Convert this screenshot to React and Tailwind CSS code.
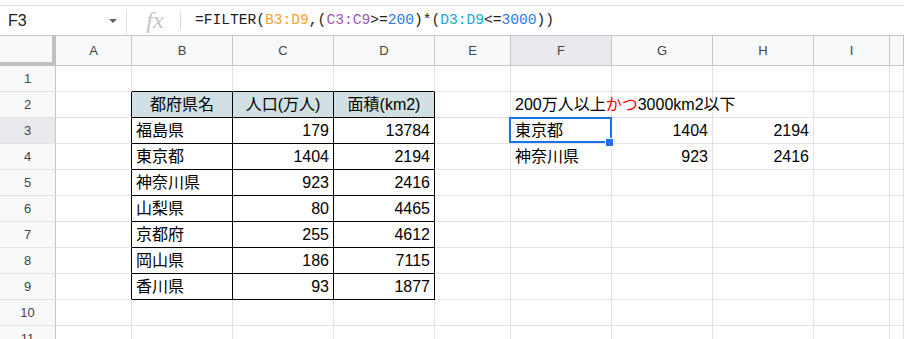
import React from "react";

const COLS = ["A", "B", "C", "D", "E", "F", "G", "H", "I", ""];
const GRID = "grid grid-cols-[56px_76px_101px_101px_101px_76px_101px_101px_101px_76px_1fr]";

const tableRows = [
  ["福島県", "179", "13784"],
  ["東京都", "1404", "2194"],
  ["神奈川県", "923", "2416"],
  ["山梨県", "80", "4465"],
  ["京都府", "255", "4612"],
  ["岡山県", "186", "7115"],
  ["香川県", "93", "1877"],
];

function Cell({ children, align = "left", black, blackRight, blackBottom, bg, overflow, className = "" }) {
  const br = black || blackRight ? "border-r-black" : "border-r-[#e2e2e2]";
  const bb = black || blackBottom ? "border-b-black" : "border-b-[#e2e2e2]";
  const al = align === "right" ? "justify-end pr-[4px]" : align === "center" ? "justify-center" : "justify-start pl-[4px]";
  return (
    <div
      className={`relative h-[26px] border-r border-b ${br} ${bb} ${bg || "bg-white"} flex items-center ${al} ${overflow ? "overflow-visible z-10" : "overflow-hidden"} whitespace-nowrap ${className}`}
    >
      {children}
    </div>
  );
}

function RowHead({ n, sel }) {
  return (
    <div
      className={`h-[26px] border-r border-r-[#c4c7c5] border-b border-b-[#e2e2e2] ${sel ? "bg-[#e8eaed]" : "bg-[#f8f9fa]"} flex items-center justify-center text-[13px] text-[#444]`}
    >
      {n}
    </div>
  );
}

export default function App() {
  const rows = [];
  for (let r = 1; r <= 11; r++) {
    const cells = [];
    cells.push(<RowHead key="h" n={r} sel={r === 3} />);
    cells.push(<Cell key="A" blackRight={r >= 2 && r <= 9} />);
    if (r === 2) {
      cells.push(<Cell key="B" black align="center" bg="bg-[#d0e0e3]">都府県名</Cell>);
      cells.push(<Cell key="C" black align="center" bg="bg-[#d0e0e3]">人口(万人)</Cell>);
      cells.push(<Cell key="D" black align="center" bg="bg-[#d0e0e3]">面積(km2)</Cell>);
    } else if (r >= 3 && r <= 9) {
      const d = tableRows[r - 3];
      cells.push(<Cell key="B" black>{d[0]}</Cell>);
      cells.push(<Cell key="C" black align="right">{d[1]}</Cell>);
      cells.push(<Cell key="D" black align="right">{d[2]}</Cell>);
    } else if (r === 1) {
      cells.push(<Cell key="B" blackBottom />);
      cells.push(<Cell key="C" blackBottom />);
      cells.push(<Cell key="D" blackBottom />);
    } else {
      cells.push(<Cell key="B" />);
      cells.push(<Cell key="C" />);
      cells.push(<Cell key="D" />);
    }
    cells.push(<Cell key="E" />);
    if (r === 2) {
      cells.push(
        <Cell key="F" overflow>
          <span>
            200万人以上<span className="text-[#ff0000]">かつ</span>3000km2以下
          </span>
        </Cell>
      );
      cells.push(<Cell key="G" />);
      cells.push(<Cell key="H" />);
    } else if (r === 3) {
      cells.push(
        <Cell key="F" overflow>
          東京都
          <div className="absolute left-[-2px] top-[-1px] right-[-1px] bottom-[0px] border-2 border-[#1a73e8] pointer-events-none" />
          <div className="absolute right-[-3px] bottom-[-4px] w-[7px] h-[7px] bg-[#1a73e8] border border-white box-content" />
        </Cell>
      );
      cells.push(<Cell key="G" align="right">1404</Cell>);
      cells.push(<Cell key="H" align="right">2194</Cell>);
    } else if (r === 4) {
      cells.push(<Cell key="F">神奈川県</Cell>);
      cells.push(<Cell key="G" align="right">923</Cell>);
      cells.push(<Cell key="H" align="right">2416</Cell>);
    } else {
      cells.push(<Cell key="F" />);
      cells.push(<Cell key="G" />);
      cells.push(<Cell key="H" />);
    }
    cells.push(<Cell key="I" />);
    cells.push(<Cell key="J" />);
    rows.push(...cells.map((c, i) => React.cloneElement(c, { key: `${r}-${i}` })));
  }

  return (
    <div
      className="w-[904px] h-[339px] overflow-hidden bg-white text-black"
      style={{ fontFamily: '"Liberation Sans", Arial, "Noto Sans CJK JP", sans-serif' }}
    >
      <div className="h-[5px] bg-white" />
      {/* formula bar */}
      <div className="h-[31px] border-t border-t-[#e0e0e0] border-b border-b-[#c4c7c5] flex items-stretch">
        <div className="w-[127px] flex items-center pl-[8px] pr-[9px] border-r border-r-[#e0e0e0] mt-[4px]">
          <span className="text-[16px] text-[#202124] -mt-[4px]">F3</span>
          <div className="ml-auto -mt-[4px] w-0 h-0 border-l-[4px] border-r-[4px] border-t-[4px] border-l-transparent border-r-transparent border-t-[#5f6368]" />
        </div>
        <div className="w-[54px] flex items-center justify-center relative">
          <span
            className="italic text-[24px] text-[#c5c5c5] leading-none -mt-[2px] ml-[2px]"
            style={{ fontFamily: '"Liberation Serif", "DejaVu Serif", serif' }}
          >
            fx
          </span>
          <div className="absolute right-0 top-[5px] bottom-[5px] w-px bg-[#dadce0]" />
        </div>
        <div
          className="flex items-center pl-[14px] text-[14.6px] text-[#202124] whitespace-nowrap"
          style={{ fontFamily: '"Liberation Mono", "DejaVu Sans Mono", monospace' }}
        >
          <span>=FILTER(</span>
          <span className="text-[#f4a235]">B3:D9</span>
          <span>,(</span>
          <span className="text-[#9c57b4]">C3:C9</span>
          <span>&gt;=</span>
          <span className="text-[#2a7ae2]">200</span>
          <span>)*(</span>
          <span className="text-[#19a7cf]">D3:D9</span>
          <span>&lt;=</span>
          <span className="text-[#2a7ae2]">3000</span>
          <span>))</span>
        </div>
      </div>
      {/* column headers */}
      <div className={GRID}>
        <div className="h-[30px] bg-[#f8f9fa] border-r-4 border-b-4 border-[#c0c0c0]" />
        {COLS.map((c, i) => (
          <div
            key={i}
            className={`h-[30px] border-r border-r-[#c4c7c5] border-b border-b-[#c4c7c5] ${c === "F" ? "bg-[#e8eaed]" : "bg-[#f8f9fa]"} flex items-center justify-center text-[13px] text-[#444]`}
          >
            {c}
          </div>
        ))}
      </div>
      <div className={`${GRID} text-[16px]`}>{rows}</div>
    </div>
  );
}
